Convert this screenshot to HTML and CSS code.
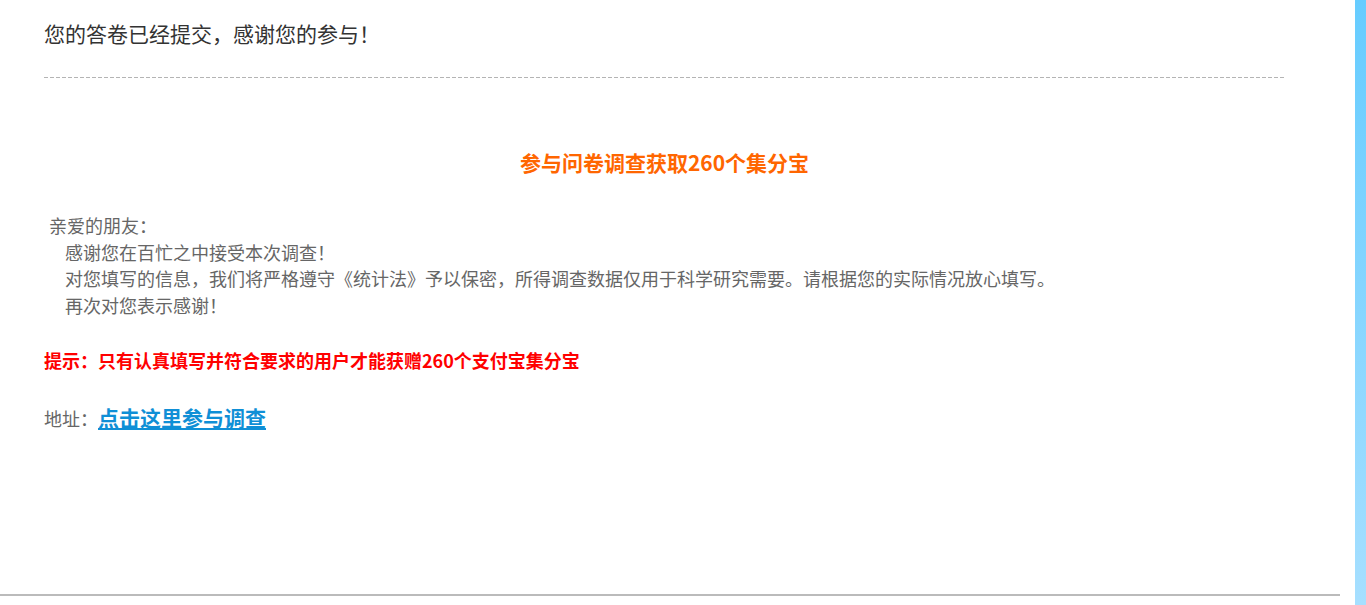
FILE: index.html
```html
<!DOCTYPE html>
<html>

<head>
  <meta charset="utf-8">
  <title>问卷提交成功</title>
  <link rel="stylesheet" href="styles.css">
</head>

<body>
  <div class="page">
    <div class="main">
      <div class="content">
        <div class="title">您的答卷已经提交，感谢您的参与！</div>
        <div class="divider"></div>

        <h2 class="heading">参与问卷调查获取260个集分宝</h2>

        <div class="letter">
          <p class="greet">亲爱的朋友：</p>
          <p class="indent">感谢您在百忙之中接受本次调查！</p>
          <p class="indent">对您填写的信息，我们将严格遵守《统计法》予以保密，所得调查数据仅用于科学研究需要。请根据您的实际情况放心填写。</p>
          <p class="indent">再次对您表示感谢！</p>
        </div>

        <p class="tip">提示：只有认真填写并符合要求的用户才能获赠260个支付宝集分宝</p>

        <p class="address">地址：<a href="#">点击这里参与调查</a></p>
      </div>

      <!-- footer line -->
      <div class="footer"></div>
    </div>

    <div class="side"></div>
  </div>
</body>

</html>
```

FILE: styles.css
```css
html,
body {
  margin: 0;
  height: 100%;
}

body {
  font-family: "Noto Sans CJK SC", "Noto Sans", sans-serif;
  background: #ffffff;
}

p,
h2 {
  margin: 0;
}

/* whole window: main column + blue bar on the right */
.page {
  display: flex;
  height: 100vh;
}

.main {
  flex: 1;
  display: flex;
  flex-direction: column;
}

.content {
  flex: 1;
  width: 1241px;
  padding-left: 44px;
}

.title {
  margin-top: 18px;
  font-size: 21px;
  line-height: 30px;
  color: #333333;
}

.divider {
  margin-top: 29px;
  height: 1px;
  background: repeating-linear-gradient(to right, #b4b4b4 0 4px, transparent 4px 6px);
}

.heading {
  margin-top: 69px;
  text-align: center;
  font-size: 21px;
  line-height: 30px;
  font-weight: bold;
  color: #ff6600;
}

/* letter text */
.letter {
  margin-top: 35px;
  font-size: 18px;
  line-height: 26.67px;
  color: #666666;
}

.greet {
  padding-left: 5px;
}

.indent {
  padding-left: 21px;
}

.tip {
  margin-top: 28px;
  font-size: 18px;
  line-height: 27px;
  font-weight: bold;
  color: #ff0000;
}

.address {
  margin-top: 28px;
  font-size: 18px;
  line-height: 30px;
  color: #666666;
}

.address a {
  font-size: 21px;
  font-weight: bold;
  color: #0f8fd6;
}

.footer {
  height: 2px;
  margin: 0 15px 9px 0;
  background: #bbbbbb;
}

.side {
  width: 11px;
  background: linear-gradient(to bottom, #66ccff, #a6dfff);
}
```
